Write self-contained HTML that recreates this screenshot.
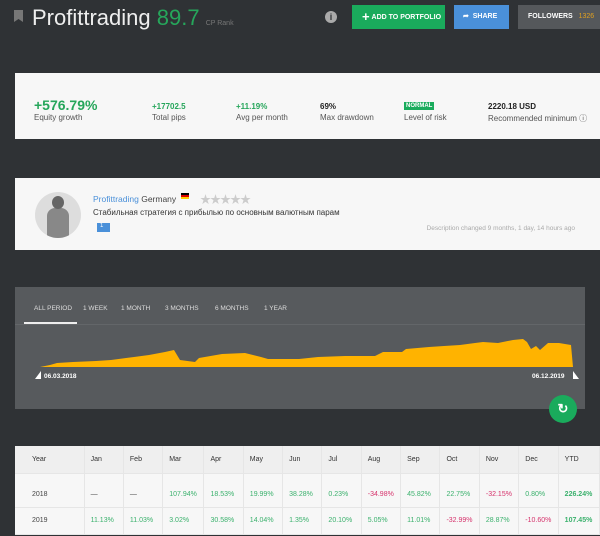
<!DOCTYPE html>
<html><head><meta charset="utf-8"><style>
*{box-sizing:border-box;margin:0;padding:0}
body{width:600px;height:536px;overflow:hidden;background:#2f3235;font-family:"Liberation Sans","Noto Sans CJK SC",sans-serif;position:relative}
.a{position:absolute}
.card{background:#f7f7f7;position:absolute;left:15px;right:0}
.lbl{font-size:8px;color:#555}
.val{font-size:8px;font-weight:bold;color:#222}
.g{color:#26a65b}
table{border-collapse:collapse;width:585px;font-size:7px;color:#444}
td{height:27px;border-right:1px solid #e6e6e6;border-bottom:1px solid #e6e6e6;padding-left:6px;width:33px}
td:first-child{width:58px;padding-left:17px}
tr.h td{background:#efefef;color:#333;height:27px}
.p{color:#3bb16d}.n{color:#d6336c}
</style></head><body>
<div class="a" style="left:14px;top:10px;width:9px;height:12px;background:#777;clip-path:polygon(0 0,100% 0,100% 100%,50% 75%,0 100%)"></div>
<div class="a" style="left:32px;top:5px;font-size:22px;color:#eee">Profittrading <span style="color:#26a65b">89.7</span> <span style="font-size:7px;color:#777">CP Rank</span></div>
<div class="a" style="left:325px;top:11px;width:12px;height:12px;border-radius:50%;background:#aaa;color:#2f3235;font-size:9px;font-weight:bold;text-align:center;line-height:12px">i</div>
<div class="a" style="left:352px;top:5px;width:93px;height:24px;background:#1aab5c;color:#fff;font-size:7px;font-weight:bold;line-height:24px;padding-left:10px"><span style="font-size:13px;vertical-align:middle">+</span>&nbsp;ADD TO PORTFOLIO</div>
<div class="a" style="left:454px;top:5px;width:55px;height:24px;background:#4a90d9;color:#fff;font-size:7px;font-weight:bold;line-height:24px;padding-left:9px">➦&nbsp;&nbsp;SHARE</div>
<div class="a" style="left:518px;top:5px;width:82px;height:24px;background:#55585b;color:#fff;font-size:7px;font-weight:bold;line-height:24px;padding-left:10px">FOLLOWERS &nbsp;&nbsp;<span style="color:#e0a020;font-weight:normal">1326</span></div>

<div class="card" style="top:73px;height:66px">
<div class="a" style="left:19px;top:24px;font-size:14px;font-weight:bold"><span class="g">+576.79%</span></div>
<div class="a lbl" style="left:19px;top:40px">Equity growth</div>
<div class="a val g" style="left:137px;top:29px">+17702.5</div><div class="a lbl" style="left:137px;top:40px">Total pips</div>
<div class="a val g" style="left:221px;top:29px">+11.19%</div><div class="a lbl" style="left:221px;top:40px">Avg per month</div>
<div class="a val" style="left:305px;top:29px">69%</div><div class="a lbl" style="left:305px;top:40px">Max drawdown</div>
<div class="a" style="left:389px;top:29px;background:#1aab5c;color:#fff;font-size:6px;font-weight:bold;padding:1px 2px">NORMAL</div><div class="a lbl" style="left:389px;top:40px">Level of risk</div>
<div class="a val" style="left:473px;top:29px">2220.18 USD</div><div class="a lbl" style="left:473px;top:40px">Recommended minimum ⓘ</div>
</div>

<div class="card" style="top:178px;height:72px">
<div class="a" style="left:20px;top:14px;width:46px;height:46px;border-radius:50%;background:#ddd;overflow:hidden"><div class="a" style="left:12px;top:16px;width:22px;height:30px;background:#888;border-radius:8px 8px 0 0"></div><div class="a" style="left:17px;top:4px;width:12px;height:13px;background:#666;border-radius:50%"></div></div>
<div class="a" style="left:78px;top:16px;font-size:8.5px;color:#4a90d9">Profittrading <span style="color:#444">Germany</span></div>
<div class="a" style="left:166px;top:15px;width:8px;height:6px;background:linear-gradient(#000 33%,#d00 33% 66%,#fc0 66%)"></div>
<div class="a" style="left:185px;top:13px;font-size:11px;color:#ccc;letter-spacing:-1px">★★★★★</div>
<div class="a" style="left:78px;top:30px;font-size:8px;color:#333">Стабильная стратегия с прибылью по основным валютным парам</div>
<div class="a" style="left:82px;top:45px;width:13px;height:9px;background:#4a90d9;color:#fff;font-size:6px;padding-left:3px">1</div>
<div class="a" style="right:25px;top:47px;font-size:6.5px;color:#aaa">Description changed 9 months, 1 day, 14 hours ago</div>
</div>

<div class="a" style="left:15px;top:287px;width:570px;height:122px;background:#575a5d">
<div class="a" style="left:0;top:37px;width:570px;height:1px;background:#636669"></div>
<div class="a" style="left:19px;top:18px;font-size:6.5px;color:#ddd">ALL PERIOD</div>
<div class="a" style="left:9px;top:35px;width:53px;height:2px;background:#eee"></div>
<div class="a" style="left:68px;top:18px;font-size:6.5px;color:#ddd">1 WEEK</div>
<div class="a" style="left:106px;top:18px;font-size:6.5px;color:#ddd">1 MONTH</div>
<div class="a" style="left:150px;top:18px;font-size:6.5px;color:#ddd">3 MONTHS</div>
<div class="a" style="left:200px;top:18px;font-size:6.5px;color:#ddd">6 MONTHS</div>
<div class="a" style="left:249px;top:18px;font-size:6.5px;color:#ddd">1 YEAR</div>
<div class="a" style="left:20px;top:84px;width:0;height:0;border-left:6px solid transparent;border-bottom:8px solid #fff"></div>
<div class="a" style="left:29px;top:86px;font-size:6.5px;color:#fff;font-weight:bold">06.03.2018</div>
<div class="a" style="left:517px;top:86px;font-size:6.5px;color:#fff;font-weight:bold">06.12.2019</div>
<div class="a" style="left:558px;top:84px;width:0;height:0;border-right:6px solid transparent;border-bottom:8px solid #fff"></div>
</div>
<svg class="a" style="left:0;top:0" width="600" height="400"><polygon fill="#ffb300" points="40,367 50,365 57,363 73,362 96,361 111,360 134,357 149,355 165,352 174,350 180,360 195,362 199,358 222,354 245,353 261,357 268,359 299,359 318,357 345,356 375,356 383,352 402,352 406,349 429,347 444,346 460,345 475,343 483,342 498,343 513,340 523,339 527,342 531,349 536,346 540,350 548,343 559,343 571,345 573,367"/></svg>
<div class="a" style="left:549px;top:395px;width:28px;height:28px;border-radius:50%;background:#1aab5c;color:#fff;font-size:13px;text-align:center;line-height:28px;font-weight:bold">↻</div>

<div class="a" style="left:15px;top:446px;background:#f7f7f7">
<table>
<tr class="h"><td>Year</td><td>Jan</td><td>Feb</td><td>Mar</td><td>Apr</td><td>May</td><td>Jun</td><td>Jul</td><td>Aug</td><td>Sep</td><td>Oct</td><td>Nov</td><td>Dec</td><td>YTD</td></tr>
<tr><td style="height:34px;padding-top:8px">2018</td><td style="padding-top:8px">—</td><td style="padding-top:8px">—</td><td class="p" style="padding-top:8px">107.94%</td><td class="p" style="padding-top:8px">18.53%</td><td class="p" style="padding-top:8px">19.99%</td><td class="p" style="padding-top:8px">38.28%</td><td class="p" style="padding-top:8px">0.23%</td><td class="n" style="padding-top:8px">-34.98%</td><td class="p" style="padding-top:8px">45.82%</td><td class="p" style="padding-top:8px">22.75%</td><td class="n" style="padding-top:8px">-32.15%</td><td class="p" style="padding-top:8px">0.80%</td><td class="p" style="font-weight:bold;padding-top:8px">226.24%</td></tr>
<tr><td>2019</td><td class="p">11.13%</td><td class="p">11.03%</td><td class="p">3.02%</td><td class="p">30.58%</td><td class="p">14.04%</td><td class="p">1.35%</td><td class="p">20.10%</td><td class="p">5.05%</td><td class="p">11.01%</td><td class="n">-32.99%</td><td class="p">28.87%</td><td class="n">-10.60%</td><td class="p" style="font-weight:bold">107.45%</td></tr>
</table></div>
</body></html>
